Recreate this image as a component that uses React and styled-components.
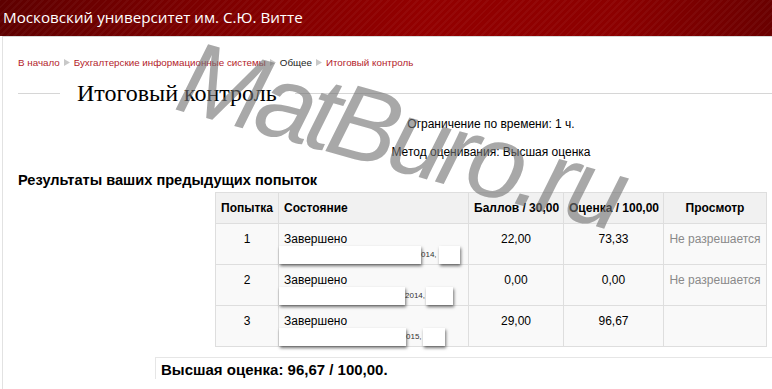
import React from "react";
import styled, { createGlobalStyle } from "styled-components";

const GlobalStyle = createGlobalStyle`
  html, body {
    margin: 0;
    padding: 0;
    background: #fff;
    font-family: "Liberation Sans", Arial, sans-serif;
    color: #000;
    overflow: hidden;
  }
`;

const Page = styled.div`
  position: relative;
  width: 772px;
  height: 389px;
  overflow: hidden;
`;

const Header = styled.div`
  height: 36px;
  display: flex;
  align-items: center;
  padding-left: 3px;
  background:
    repeating-linear-gradient(-45deg, rgba(255, 255, 255, 0.035) 0 2px, transparent 2px 5px),
    linear-gradient(90deg, #5e0000 0%, #7c0000 25%, #930000 55%, #8c0000 80%, #6a0000 100%);
  color: #fff;
  font-family: "Open Sans", "Noto Sans", sans-serif;
  font-size: 15.2px;
  box-sizing: border-box;
  padding-bottom: 2px;
`;

const Main = styled.div`
  margin-left: 2px;
  border-left: 1px solid #e2e2e2;
  border-top: 1px solid #d8d8d8;
  height: 352px;
`;

const Crumbs = styled.div`
  display: flex;
  align-items: center;
  gap: 4px;
  padding: 18px 0 0 15px;
  height: 14px;
  font-size: 9.8px;
`;

const Crumb = styled.span`
  color: ${(p) => (p.$plain ? "#222" : "#b3232a")};
`;

const Sep = () => (
  <svg width="6" height="7" viewBox="0 0 6 7">
    <path d="M0 0 L6 3.5 L0 7 Z" fill="#c8c8c8" />
  </svg>
);

const TitleRow = styled.div`
  display: flex;
  align-items: center;
  margin-top: 12px;
  padding-left: 15px;
  height: 24px;
  &::before {
    content: "";
    width: 42px;
    border-top: 1px solid #d6d6d6;
  }
  &::after {
    content: "";
    flex: 1;
    border-top: 1px solid #d6d6d6;
  }
`;

const Title = styled.h2`
  margin: 0;
  padding: 0 0 0 17px;
  width: 218px;
  font-family: "Liberation Serif", "Times New Roman", serif;
  font-weight: normal;
  font-size: 24px;
  line-height: 24px;
`;

const Info = styled.div`
  margin: 12px 0 0 212px;
  width: 552px;
  text-align: center;
  font-size: 12px;
  p {
    margin: 0;
    line-height: 15px;
  }
  p + p {
    margin-top: 13px;
  }
`;

const Results = styled.h3`
  margin: 11px 0 0 15px;
  font-size: 14.6px;
  line-height: 18px;
  font-weight: bold;
`;

const Table = styled.table`
  margin: 3px 0 0 212px;
  border-collapse: collapse;
  table-layout: fixed;
  width: 551px;
  font-size: 12px;
  td, th {
    border: 1px solid #dedede;
    padding: 0 5px;
    white-space: nowrap;
  }
  th {
    background: #f1f1f1;
    height: 30px;
    font-weight: bold;
  }
  td {
    background: #f9f9f9;
    height: 41px;
    vertical-align: top;
    padding-top: 8px;
    line-height: 14px;
    box-sizing: border-box;
  }
`;

const Col = styled.col`
  width: ${(p) => p.$w}px;
`;

const Cell = styled.td`
  text-align: ${(p) => (p.$left ? "left" : "center")};
  color: ${(p) => (p.$muted ? "#8a8a8a" : "#000")};
`;

const Head = styled.th`
  text-align: ${(p) => (p.$left ? "left" : "center")};
`;

const Redacted = styled.div`
  display: flex;
  align-items: center;
  margin: 0 0 0 -5px;
  font-size: 8px;
  line-height: 18px;
  color: #333;
`;

const Blank = styled.span`
  display: inline-block;
  width: ${(p) => p.$w}px;
  height: 18px;
  background: #fff;
  box-shadow: 1px 2px 3px rgba(0, 0, 0, 0.55);
`;

const Best = styled.div`
  margin: 10px 0 0 152px;
  border-left: 1px solid #e6e6e6;
  border-top: 1px solid #e6e6e6;
  padding: 3px 0 0 5px;
  font-size: 15px;
  font-weight: bold;
  line-height: 18px;
`;

const Watermark = styled.div`
  position: absolute;
  left: 196px;
  top: 24px;
  font-family: "Liberation Sans", Arial, sans-serif;
  font-style: italic;
  font-size: 104px;
  letter-spacing: -6px;
  line-height: 1;
  color: rgba(115, 115, 115, 0.62);
  transform: rotate(15.5deg);
  transform-origin: 0 0;
  white-space: nowrap;
  pointer-events: none;
`;

const attempts = [
  { n: 1, score: "22,00", grade: "73,33", view: "Не разрешается", a: 142, t: "014,", b: 21, g: 2 },
  { n: 2, score: "0,00", grade: "0,00", view: "Не разрешается", a: 126, t: "2014,", b: 27, g: 1 },
  { n: 3, score: "29,00", grade: "96,67", view: "", a: 127, t: "015,", b: 22, g: 1 },
];

export default function App() {
  return (
    <Page>
      <GlobalStyle />
      <Header>Московский университет им. С.Ю. Витте</Header>
      <Main>
        <Crumbs>
          <Crumb>В начало</Crumb>
          <Sep />
          <Crumb>Бухгалтерские информационные системы</Crumb>
          <Sep />
          <Crumb $plain>Общее</Crumb>
          <Sep />
          <Crumb>Итоговый контроль</Crumb>
        </Crumbs>
        <TitleRow>
          <Title>Итоговый контроль</Title>
        </TitleRow>
        <Info>
          <p>Ограничение по времени: 1 ч.</p>
          <p>Метод оценивания: Высшая оценка</p>
        </Info>
        <Results>Результаты ваших предыдущих попыток</Results>
        <Table>
          <colgroup>
            <Col $w={63} />
            <Col $w={190} />
            <Col $w={95} />
            <Col $w={100} />
            <Col $w={103} />
          </colgroup>
          <thead>
            <tr>
              <Head>Попытка</Head>
              <Head $left>Состояние</Head>
              <Head>Баллов / 30,00</Head>
              <Head>Оценка / 100,00</Head>
              <Head>Просмотр</Head>
            </tr>
          </thead>
          <tbody>
            {attempts.map((r) => (
              <tr key={r.n}>
                <Cell>{r.n}</Cell>
                <Cell $left>
                  Завершено
                  <Redacted>
                    <Blank $w={r.a} />
                    {r.t}
                    <Blank $w={r.b} style={{ marginLeft: r.g }} />
                  </Redacted>
                </Cell>
                <Cell>{r.score}</Cell>
                <Cell>{r.grade}</Cell>
                <Cell $muted>{r.view}</Cell>
              </tr>
            ))}
          </tbody>
        </Table>
        <Best>Высшая оценка: 96,67 / 100,00.</Best>
      </Main>
      <Watermark>MatBuro.ru</Watermark>
    </Page>
  );
}
